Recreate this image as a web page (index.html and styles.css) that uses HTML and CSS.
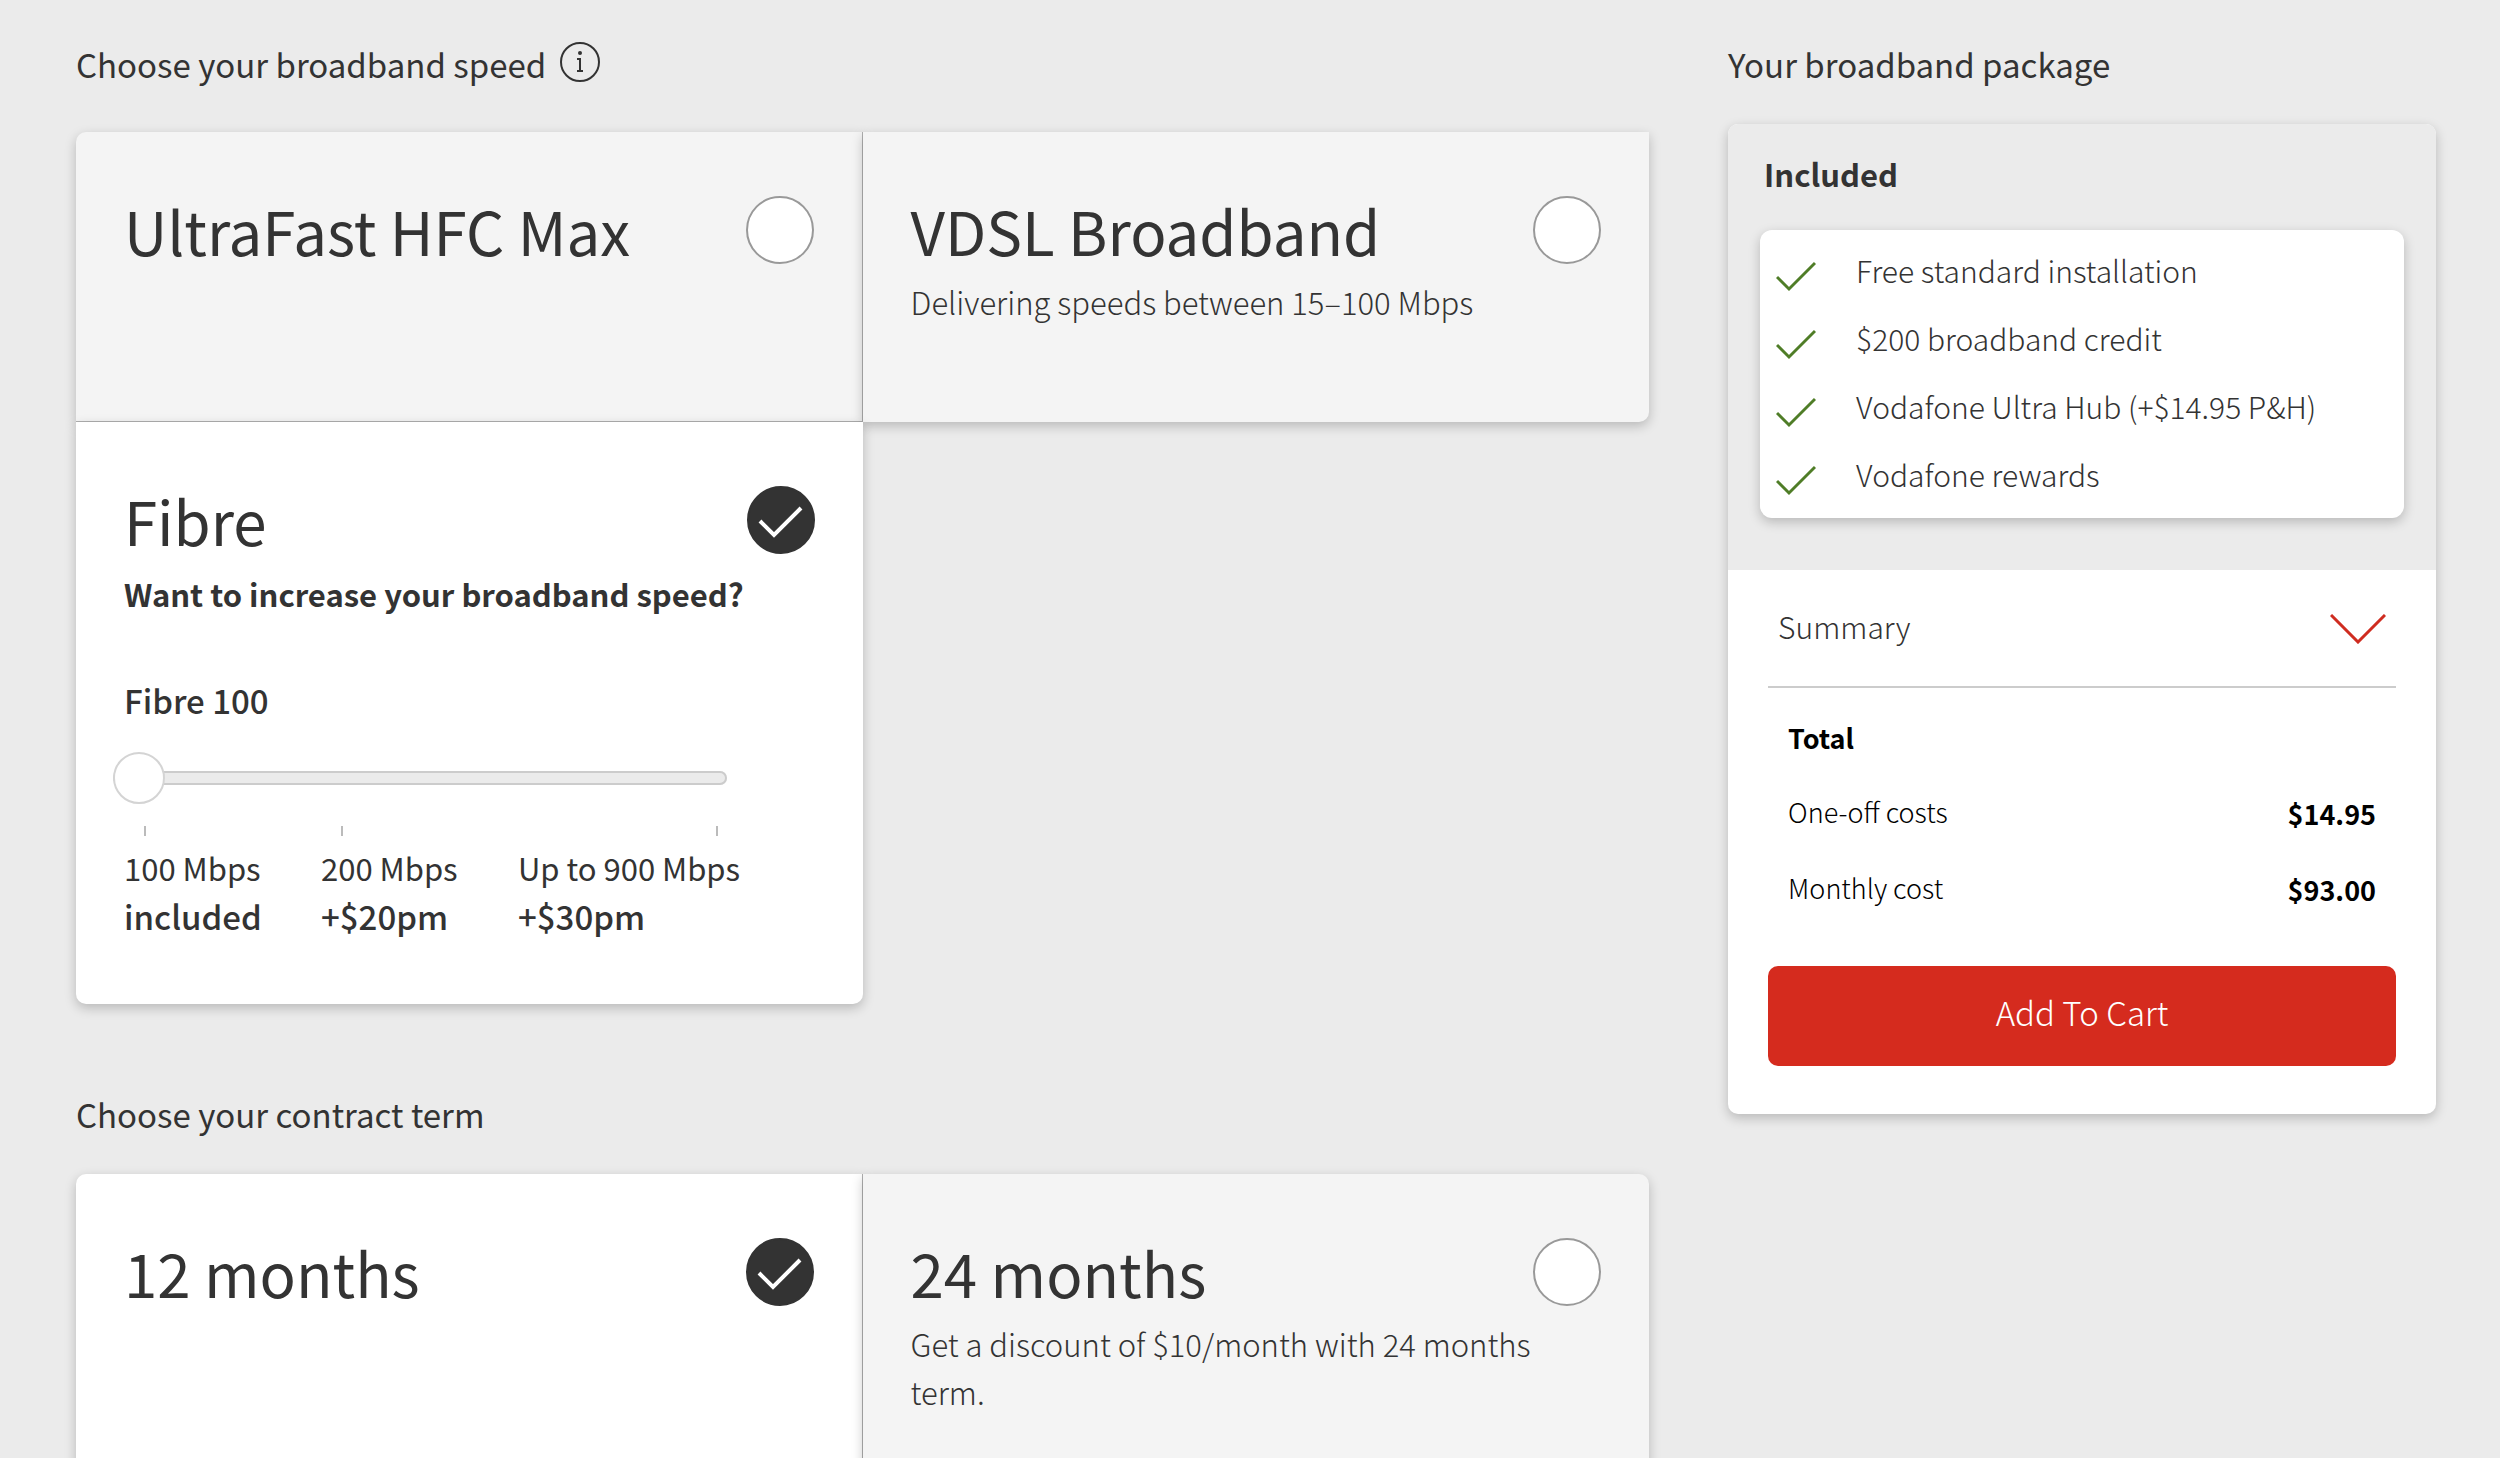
FILE: index.html
```html
<!DOCTYPE html>
<html lang="en">
<head>
<meta charset="utf-8">
<meta name="viewport" content="width=device-width, initial-scale=1">
<title>Choose your broadband</title>
<link rel="stylesheet" href="styles.css">
</head>
<body>
<svg class="sprite" aria-hidden="true">
  <symbol id="tick" viewBox="0 0 68 68"><path d="M13 35 L27 49 L54 22" fill="none" stroke="#fff" stroke-width="4"/></symbol>
  <symbol id="check" viewBox="0 0 40 40"><path d="M1 22 L13 34 L39 8" fill="none" stroke="#4f7d27" stroke-width="3"/></symbol>
</svg>
<main class="page">
  <form class="options">
    <section>
      <h2 class="heading heading--first">Choose your broadband speed
        <svg class="info" viewBox="0 0 40 40" role="img" aria-label="More information"><circle cx="20" cy="20" r="19" fill="none" stroke="#333" stroke-width="2"/><circle cx="20" cy="11" r="2" fill="#333"/><path d="M17 17 H20 V29 M17 29 H23" fill="none" stroke="#333" stroke-width="2"/></svg>
      </h2>
      <div class="cards cards--speed">
        <div class="card">
          <div class="card__head">
            <label class="card__title" for="hfc">UltraFast HFC Max</label>
            <span class="radio"><input type="radio" name="speed" id="hfc"></span>
          </div>
        </div>
        <div class="card">
          <div class="card__head">
            <label class="card__title" for="vdsl">VDSL Broadband</label>
            <span class="radio"><input type="radio" name="speed" id="vdsl"></span>
          </div>
          <p class="card__text">Delivering speeds between 15–100 Mbps</p>
        </div>
        <div class="card card--selected">
          <div class="card__head">
            <label class="card__title" for="fibre">Fibre</label>
            <span class="radio"><input type="radio" name="speed" id="fibre" checked><svg><use href="#tick"/></svg></span>
          </div>
          <p class="card__question">Want to increase your broadband speed?</p>
          <label class="slider-label" for="plan">Fibre 100</label>
          <input class="slider" type="range" id="plan" min="0" max="2" value="0">
          <ul class="speeds">
            <li>100 Mbps<strong>included</strong></li>
            <li>200 Mbps<strong>+$20pm</strong></li>
            <li>Up to 900 Mbps<strong>+$30pm</strong></li>
          </ul>
        </div>
      </div>
    </section>
    <section>
      <h2 class="heading">Choose your contract term</h2>
      <div class="cards cards--term">
        <div class="card card--selected">
          <div class="card__head">
            <label class="card__title" for="m12">12 months</label>
            <span class="radio"><input type="radio" name="term" id="m12" checked><svg><use href="#tick"/></svg></span>
          </div>
        </div>
        <div class="card">
          <div class="card__head">
            <label class="card__title" for="m24">24 months</label>
            <span class="radio"><input type="radio" name="term" id="m24"></span>
          </div>
          <p class="card__text">Get a discount of $10/month with 24 months term.</p>
        </div>
      </div>
    </section>
  </form>
  <aside>
    <h2 class="heading">Your broadband package</h2>
    <div class="package">
      <div class="package__included">
        <h3 class="package__title">Included</h3>
        <ul class="included">
          <li><svg><use href="#check"/></svg>Free standard installation</li>
          <li><svg><use href="#check"/></svg>$200 broadband credit</li>
          <li><svg><use href="#check"/></svg>Vodafone Ultra Hub (+$14.95 P&amp;H)</li>
          <li><svg><use href="#check"/></svg>Vodafone rewards</li>
        </ul>
      </div>
      <div class="package__costs">
        <button class="summary" type="button" aria-expanded="false">Summary
          <svg viewBox="0 0 56 30" aria-hidden="true"><path d="M1 1 L28 28 L55 1" fill="none" stroke="#cf2c20" stroke-width="3"/></svg>
        </button>
        <table class="totals">
          <caption>Total</caption>
          <tbody>
            <tr><th scope="row">One-off costs</th><td>$14.95</td></tr>
            <tr><th scope="row">Monthly cost</th><td>$93.00</td></tr>
          </tbody>
        </table>
        <button class="cart" type="button">Add To Cart</button>
      </div>
    </div>
  </aside>
</main>
</body>
</html>
```
FILE: styles.css
```css
*,
*::before,
*::after {
  box-sizing: border-box;
}

body {
  margin: 0;
  background: #ebebeb;
  color: #333;
  font-family: "Noto Sans CJK JP", "Noto Sans", sans-serif;
  font-size: 31px;
  line-height: 48px;
}

h2,
h3,
p,
ul {
  margin: 0;
  padding: 0;
}

ul {
  list-style: none;
}

button,
input {
  font: inherit;
  color: inherit;
}

.sprite {
  display: none;
}

.page {
  display: grid;
  grid-template-columns: minmax(0, 20fr) minmax(0, 9fr);
  gap: 79px;
  align-items: start;
  padding: 40px 64px 0 76px;
}

.options {
  display: grid;
  gap: 86px;
}

.heading {
  display: flex;
  align-items: center;
  gap: 14px;
  margin-bottom: 36px;
  font-size: 33px;
  font-weight: 400;
}

.heading--first {
  margin-bottom: 44px;
}

.info {
  width: 40px;
  height: 40px;
  margin-bottom: 4px;
}

/* Option cards */
.cards {
  display: grid;
  grid-template-columns: 1fr 1fr;
}

.card {
  min-height: 290px;
  padding: 64px 48px;
  background: #f4f4f4;
  box-shadow: 0 4px 12px rgba(0, 0, 0, 0.22);
}

.card:nth-child(odd) {
  border-right: 1px solid #afafaf;
  border-top-left-radius: 10px;
}

.card--selected {
  background: #fff;
}

.cards--speed .card:first-child {
  border-bottom: 1px solid #afafaf;
}

.cards--speed .card:nth-child(2) {
  border-bottom-right-radius: 10px;
}

.cards--speed .card--selected {
  border-right: 0;
  border-radius: 0 0 10px 10px;
}

.cards--term .card:last-child {
  border-top-right-radius: 10px;
}

.card__head {
  display: flex;
  justify-content: space-between;
}

.card__title {
  font-size: 60px;
  line-height: 68px;
}

.card__text {
  margin-top: 14px;
  padding-right: 32px;
  font-weight: 300;
}

.card__question {
  margin-top: 16px;
  font-weight: 700;
}

.radio {
  display: grid;
}

.radio > * {
  grid-area: 1 / 1;
  width: 68px;
  height: 68px;
  margin: 0;
}

.radio input {
  appearance: none;
  border: 2px solid #999;
  border-radius: 50%;
  background: #fff;
}

.radio input:checked {
  border-color: #333;
  background: #333;
}

.radio svg {
  z-index: 1;
  pointer-events: none;
}

/* Speed slider */
.slider-label {
  display: block;
  margin-top: 58px;
  font-size: 33px;
  font-weight: 500;
}

.slider {
  display: block;
  appearance: none;
  width: 100%;
  max-width: 614px;
  height: 52px;
  margin: 28px 0 22px -11px;
  background: none;
}

.slider::-webkit-slider-runnable-track {
  height: 14px;
  border-radius: 7px;
  background: #ebebeb;
  box-shadow: inset 0 0 0 2px #ccc;
}

.slider::-webkit-slider-thumb {
  appearance: none;
  width: 52px;
  height: 52px;
  margin-top: -19px;
  border: 2px solid #d4d4d4;
  border-radius: 50%;
  background: #fff;
}

.speeds {
  display: grid;
  grid-template-columns: 197px 197px 220px;
  white-space: nowrap;
}

.speeds li::before {
  content: "";
  display: block;
  width: 2px;
  height: 10px;
  margin: 0 20px 8px;
  background: #bbb;
}

.speeds li:last-child::before {
  margin-left: auto;
}

.speeds strong {
  display: block;
  font-size: 33px;
  font-weight: 500;
}

/* Package panel */
.package {
  overflow: hidden;
  border-radius: 10px;
  background: #fff;
  box-shadow: 0 4px 12px rgba(0, 0, 0, 0.22);
}

.package__included {
  padding: 26px 32px 52px;
  background: #ebebeb;
}

.package__title {
  padding-left: 4px;
  margin-bottom: 32px;
  font-size: 31px;
  font-weight: 700;
}

.included {
  padding: 8px 16px;
  border-radius: 12px;
  background: #fff;
  box-shadow: 0 4px 12px rgba(0, 0, 0, 0.22);
  font-size: 30px;
  font-weight: 300;
}

.included li {
  display: flex;
  gap: 40px;
  padding: 8px 0 12px;
}

.included svg {
  width: 40px;
  height: 40px;
  flex: none;
  margin-top: 9px;
  margin-bottom: -1px;
}

.package__costs {
  padding: 0 40px 48px;
}

.summary {
  display: flex;
  align-items: center;
  justify-content: space-between;
  width: 100%;
  padding: 32px 10px 36px;
  border: 0;
  border-bottom: 2px solid #ccc;
  background: none;
  font-size: 30px;
  font-weight: 300;
}

.summary svg {
  width: 56px;
  height: 30px;
  margin-top: 6px;
}

.totals {
  width: 100%;
  margin: 14px 0 40px;
  border-collapse: collapse;
  color: #000;
  font-size: 27px;
}

.totals caption {
  padding: 12px 20px;
  font-weight: 700;
  text-align: left;
}

.totals th {
  padding: 14px 20px;
  font-weight: 300;
  text-align: left;
}

.totals td {
  padding: 16px 20px 12px;
  font-weight: 700;
  text-align: right;
}

.cart {
  display: block;
  width: 100%;
  padding: 22px 24px 30px;
  border: 0;
  border-radius: 10px;
  background: #d52b1e;
  color: #fff;
  font-size: 33px;
  font-weight: 300;
}
```
